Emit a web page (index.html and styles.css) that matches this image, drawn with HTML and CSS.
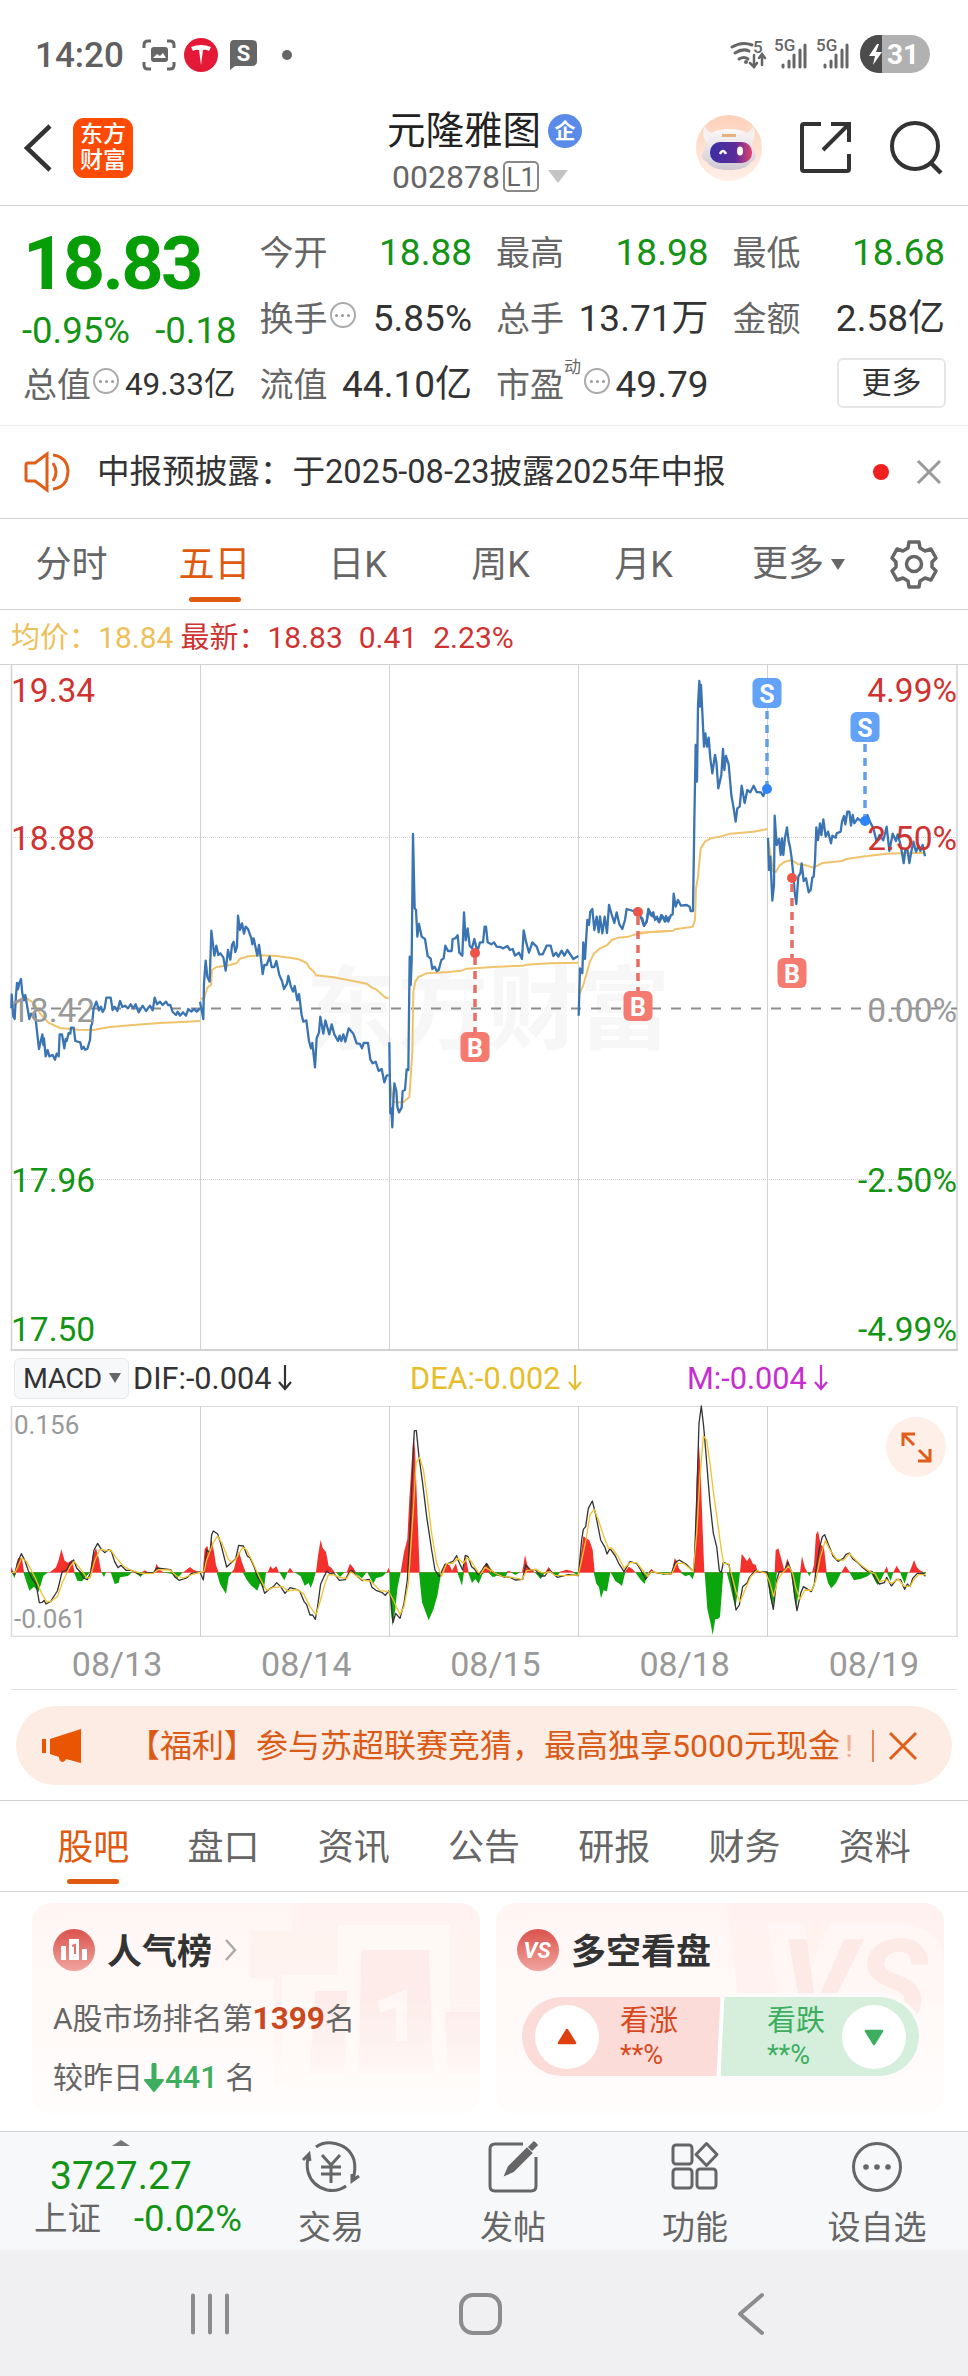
FILE: index.html
```
<!DOCTYPE html>
<html lang="zh">
<head>
    <meta charset="UTF-8">
    <meta name="viewport" content="width=device-width, initial-scale=1.0">
    <title>元隆雅图 002878</title>
    <link rel="stylesheet" href="styles.css">
</head>
<body>
    <div class="status-bar">
        <span class="clock">14:20</span>
        <svg class="status-left" width="160" height="40" viewBox="140 35 160 40">
            <g fill="none" stroke="#666" stroke-width="3">
                <path d="M144 48v-3q0-4 4-4h3M167 41h3q4 0 4 4v3M144 62v3q0 4 4 4h3M167 69h3q4 0 4-4v-3"/>
            </g>
            <rect x="151" y="47" width="17" height="15" rx="3" fill="#666"/>
            <path d="M153 58l4-4 3 2 3-3 3 5z" fill="#fff"/>
            <circle cx="201" cy="55" r="17" fill="#e31937"/>
            <path d="M191 47q10-4 20 0l-2 4q-3-2-6-1l-2 15-2-15q-3-1-6 1z" fill="#fff"/>
            <path d="M234 40h18q5 0 5 5v16q0 5-5 5h-17l-5 4v-25q0-5 4-5z" fill="#666"/>
            <text class="s-glyph" x="243.500" y="61" text-anchor="middle">S</text>
            <circle cx="287" cy="55" r="5" fill="#666"/>
        </svg>
        <svg class="status-right" width="206" height="44" viewBox="730 34 206 44">
            <g fill="none" stroke="#666" stroke-width="3" stroke-linecap="round">
                <path d="M734 48q10-6 20-2M737 54q8-5 14-2M741 60q5-3 9 0"/>
                <path d="M756 56v11M752 64l4 4 3-4M764 66v-10M761 59l3-4 3 4" stroke-width="2.500"/>
            </g>
            <circle cx="748" cy="63" r="2" fill="#666"/>
            <g class="net">
                <text x="755" y="54">5</text>
                <text x="776" y="52">5G</text>
                <text x="818" y="52">5G</text>
            </g>
            <g stroke="#666" stroke-width="3" stroke-linecap="round">
                <path d="M785 66v2M791 62v6M796 56v12M802 51v17M807 46v22"/>
                <path d="M827 66v2M833 62v6M838 56v12M844 51v17M849 46v22"/>
            </g>
            <rect x="862" y="36" width="70" height="38" rx="19" fill="#b1b1b1"/>
            <path d="M884 36h-3a19 19 0 0 0 0 38h3z" fill="#4c4c4c"/>
            <path d="M879 45l-8 12h6l-2 9 9-13h-6l3-8z" fill="#fff"/>
            <text class="bat" x="905" y="65" text-anchor="middle">31</text>
        </svg>
    </div>

    <header class="header">
        <svg class="back" width="32" height="50" viewBox="0 0 32 50"><path d="M30 3L7 25l23 22" fill="none" stroke="#333" stroke-width="4.500"/></svg>
        <div class="logo">东方<br>财富</div>
        <div class="title">
            <div class="name">元隆雅图<span class="qi">企</span></div>
            <div class="code">002878<span class="level">L1</span><i class="tri tri-grey"></i></div>
        </div>
        <div class="head-icons">
            <svg width="68" height="68" viewBox="0 0 68 68">
                <defs>
                    <linearGradient id="peach" x1="0" y1="0" x2="0" y2="1"><stop offset="0" stop-color="#fdd0b8"/><stop offset="1" stop-color="#fff0e8"/></linearGradient>
                    <linearGradient id="visor"><stop offset="0" stop-color="#3a2fa5"/><stop offset=".6" stop-color="#5a2b98"/><stop offset="1" stop-color="#e0436e"/></linearGradient>
                    <linearGradient id="shell" x1="0" y1="0" x2="0" y2="1"><stop offset="0" stop-color="#fbf8f8"/><stop offset="1" stop-color="#cfc8d2"/></linearGradient>
                </defs>
                <circle cx="34" cy="34" r="33" fill="url(#peach)"/>
                <path d="M10 12q-5 10 3 18h42q8-8 3-18-2 6-8 7-16-8-32 0-6-1-8-7z" fill="#f4f1f3"/>
                <path d="M12 30q0-15 22-15t23 15l4 12q-1 5-5 6-5 8-22 8T12 48q-5-2-5-7z" fill="url(#shell)"/>
                <path d="M27 20h14v3H27z" fill="#e6b17c"/>
                <rect x="15" y="28" width="42" height="21" rx="10" fill="url(#visor)"/>
                <path d="M25 40q3-6 6 0" fill="none" stroke="#fff" stroke-width="2.500"/>
                <ellipse cx="45" cy="37" rx="3" ry="4.500" fill="#fff"/>
            </svg>
            <svg width="54" height="54" viewBox="0 0 54 54"><path d="M22 3H5q-2 0-2 2v43q0 2 2 2h43q2 0 2-2V33M32 3h18v18M49 4L24 29" fill="none" stroke="#333" stroke-width="4"/></svg>
            <svg width="56" height="56" viewBox="0 0 56 56"><circle cx="26" cy="26" r="23" fill="none" stroke="#333" stroke-width="4"/><path d="M41 42l11 11" stroke="#333" stroke-width="4.500"/></svg>
        </div>
    </header>

    <section class="quote">
        <div class="price-box">
            <div class="price">18.83</div>
            <div class="change"><span>-0.95%</span><span>-0.18</span></div>
        </div>
        <div class="cell"><label>今开</label><b class="green">18.88</b></div>
        <div class="cell"><label>最高</label><b class="green">18.98</b></div>
        <div class="cell"><label>最低</label><b class="green">18.68</b></div>
        <div class="cell"><label>换手</label><i class="dots"></i><b>5.85%</b></div>
        <div class="cell"><label>总手</label><b>13.71万</b></div>
        <div class="cell"><label>金额</label><b>2.58亿</b></div>
        <div class="cell small"><label>总值</label><i class="dots"></i><b>49.33亿</b></div>
        <div class="cell"><label>流值</label><b>44.10亿</b></div>
        <div class="cell"><label>市盈</label><sup>动</sup><i class="dots"></i><b>49.79</b></div>
        <div class="cell"><span class="more-btn">更多</span></div>
    </section>

    <div class="notice">
        <svg width="48" height="42" viewBox="0 0 48 42" fill="none" stroke="#df5f1a" stroke-width="3"><path d="M4 12h7L23 3v36L11 30H4q-2 0-2-2V14q0-2 2-2zM29 12q6 9 0 18M29 4q9 1 13 8t0 18q-4 7-13 8"/></svg>
        <p>中报预披露：于2025-08-23披露2025年中报</p>
        <i class="red-dot"></i>
        <svg width="26" height="26" viewBox="0 0 26 26"><path d="M2 2l22 22M24 2L2 24" stroke="#999" stroke-width="3"/></svg>
    </div>

    <nav class="k-tabs">
        <span>分时</span>
        <span class="on">五日</span>
        <span>日K</span>
        <span>周K</span>
        <span>月K</span>
        <span>更多<i class="tri"></i></span>
        <svg width="50" height="50" viewBox="0 0 50 50" fill="none" stroke="#666" stroke-width="3.500"><path d="M20 3h10l1 6 5 3 6-2 5 9-4 4v5l4 4-5 9-6-2-5 3-1 6H20l-1-6-5-3-6 2-5-9 4-4v-5l-4-4 5-9 6 2 5-3z" stroke-linejoin="round"/><circle cx="25" cy="25" r="7.500"/></svg>
    </nav>

    <div class="legend">
        <span class="avg"><small>均价：</small>18.84</span>
        <span><small>最新：</small>18.83</span>
        <span>0.41</span>
        <span>2.23%</span>
    </div>

    <!-- 五日分时走势 -->
    <svg class="chart" width="968" height="688" viewBox="0 663 968 688">
        <text class="watermark" x="306" y="1042">东方财富</text>
        <g stroke="#d2d2d2" fill="none">
            <path d="M0 664.500h968" stroke-width="1"/>
            <path d="M11.500 665v686M957 665v686" stroke-width="1.500"/>
            <path d="M200.500 665v686M389.500 665v686M578.500 665v686M767.500 665v686"/>
            <path d="M11 837.500h946M11 1179.500h946" stroke-dasharray="1 1"/>
            <path d="M11 1350h947" stroke-width="2"/>
        </g>
        <path d="M31 1008.500h926" stroke="#8c8c8c" stroke-width="2" stroke-dasharray="10 10"/>
        <g class="avg-line">
            <g transform="translate(0 655) scale(.33333)">
                <polyline points="34,1055 50,1045 65,1030 80,1030 95,1040 105,1050 120,1075 145,1103 180,1119 235,1124 280,1125 330,1116 400,1110 480,1104 560,1100 600,1098"/>
                <polyline points="600,1030 612,1032 622,998 633,990 636,945 650,936 690,930 710,924 720,911 745,904 780,901 830,903 895,912 920,924 928,938 940,948 948,961 1000,967 1040,974 1100,986 1115,997 1130,1004 1145,1018 1158,1029 1166,1030"/>
            </g>
            <g transform="translate(370 655) scale(.33333)">
                <polyline points="60,1280 70,1342 100,1342 118,1326 127,1190 130,1010 136,980 145,966 170,955 235,951 275,947 290,941 370,936 460,932 470,929 540,925 625,923"/>
                <polyline points="627,1020 640,990 650,955 660,920 672,896 690,880 712,870 725,855 745,848 775,845 805,836 840,831 900,828"/>
            </g>
            <g transform="translate(640 655) scale(.33333)">
                <polyline points="0,833 100,827 105,823 158,815 165,795 168,700 174,665 182,580 195,560 215,549 240,545 270,536 340,530 383,522"/>
                <polyline points="385,560 400,650 408,650 418,632 435,620 455,615 475,628 498,631 520,638 548,624 605,618 620,612 675,604 740,596 800,594 855,594"/>
            </g>
        </g>
        <g class="price-line">
            <g transform="translate(0 655) scale(.33333)">
                <polyline points="34,1060 35,1018 40,1085 44,1092 48,1020 51,984 54,1003 58,984 63,972 67,1015 72,1036 76,1020 81,1050 88,1092 93,1076 98,1082 105,1070 110,1120 117,1182 122,1160 127,1138 130,1170 132,1150 137,1204 143,1185 148,1204 158,1200 165,1214 170,1196 176,1204 179,1138 186,1138 193,1180 197,1152 200,1158 206,1134 211,1136 213,1118 221,1118 226,1158 241,1162 245,1182 251,1175 255,1184 262,1182 270,1155 273,1112 276,1108 281,1060 289,1040 297,1066 303,1055 308,1071 314,1060 319,1028 332,1028 338,1065 344,1055 352,1068 360,1038 367,1056 375,1052 384,1060 392,1048 400,1060 407,1048 416,1072 428,1052 438,1068 450,1052 458,1066 464,1028 471,1048 480,1040 488,1050 498,1040 504,1050 511,1050 518,1071 528,1080 533,1070 540,1082 549,1072 558,1082 565,1062 574,1070 582,1062 590,1070 600,1060"/>
                <polyline points="600,1040 610,1092 612,985 617,917 622,965 629,980 634,827 638,860 643,902 649,872 655,900 661,895 670,907 677,947 684,885 691,914 696,870 701,860 706,891 711,875 714,782 720,825 726,805 732,836 737,815 744,822 754,850 757,868 761,850 772,902 777,870 782,905 788,957 793,930 800,930 809,905 815,936 823,936 829,918 838,960 846,978 852,1002 861,986 865,963 873,995 879,1010 884,993 892,1036 897,1017 905,1080 910,1100 919,1096 927,1158 933,1180 937,1164 945,1237 950,1150 957,1132 961,1085 970,1136 976,1096 988,1138 995,1108 1003,1138 1014,1158 1019,1142 1024,1158 1030,1138 1036,1160 1046,1120 1060,1136 1070,1165 1080,1167 1086,1180 1091,1164 1104,1164 1111,1213 1118,1225 1127,1220 1136,1248 1145,1242 1153,1282 1160,1262 1166,1260"/>
            </g>
            <g transform="translate(370 655) scale(.33333)">
                <polyline points="58,1162 61,1375 64,1360 67,1417 70,1340 73,1285 79,1308 82,1355 87,1372 95,1358 98,1308 105,1305 110,1243 115,1245 119,905 122,990 125,920 129,537 134,760 138,765 142,845 147,807 155,845 165,852 173,903 182,911 187,942 194,935 200,948 206,945 214,915 221,910 226,872 234,888 245,888 248,852 256,850 263,841 268,893 277,902 282,772 287,856 293,820 299,872 306,880 313,852 322,890 330,862 339,862 344,815 348,815 353,862 364,868 372,862 380,875 391,876 400,880 412,873 420,885 428,882 435,902 447,893 456,912 461,826 468,860 477,893 487,862 500,875 508,898 518,898 530,872 542,872 550,903 558,893 565,905 575,887 583,902 592,885 610,912 625,903"/>
                <polyline points="626,1082 630,940 637,955 640,862 645,912 652,795 657,810 661,770 667,762 673,825 680,785 686,832 690,784 697,835 704,785 711,834 717,750 724,775 733,804 740,772 748,808 757,822 765,795 770,762 790,768 800,762 811,782 822,812 830,800 836,764 847,784 860,790 868,802 877,782 885,800 900,785"/>
            </g>
            <g transform="translate(640 655) scale(.33333)">
                <polyline points="0,788 7,790 12,813 20,800 25,762 32,780 40,772 45,795 51,785 56,800 64,780 73,795 78,783 85,800 93,780 98,778 101,716 107,755 114,735 123,752 140,750 149,755 152,768 159,768 163,500 167,270 171,380 174,150 178,78 180,155 183,90 192,275 196,235 201,275 206,248 211,310 217,355 225,300 229,320 235,400 244,360 249,282 253,345 258,303 266,328 274,420 281,460 287,500 292,460 299,455 305,392 314,444 322,405 331,412 341,392 350,411 363,412 370,423 377,405 383,402"/>
                <polyline points="384,548 387,645 391,605 397,737 402,690 404,482 410,570 417,552 422,600 426,550 430,600 435,548 441,517 446,560 450,575 455,610 460,660 464,710 469,747 475,665 481,655 485,625 491,678 498,670 506,712 512,705 517,668 521,665 525,618 529,517 534,555 540,505 544,540 550,493 557,545 564,530 573,565 577,542 587,548 590,535 602,530 606,500 612,483 616,508 622,470 628,470 633,512 638,480 643,505 653,490 665,500 674,497 682,480 690,500 700,520 710,560 719,540 730,556 740,515 748,588 758,536 768,558 773,538 782,570 791,624 796,585 802,582 808,624 814,590 820,560 828,590 836,572 841,588 848,570 855,604"/>
            </g>
        </g>
        <g class="buy">
            <path d="M475 957v76M638 917v74M792 884v74"/>
            <circle cx="475" cy="953" r="5"/><circle cx="638" cy="912" r="5"/><circle cx="792" cy="878" r="5"/>
            <rect x="460.500" y="1032" width="29" height="30" rx="6"/><text x="475" y="1057">B</text>
            <rect x="623.500" y="991" width="29" height="30" rx="6"/><text x="638" y="1016">B</text>
            <rect x="777.500" y="958" width="29" height="30" rx="6"/><text x="792" y="983">B</text>
        </g>
        <g class="sell">
            <path d="M767 711v74M865 744v74"/>
            <circle cx="767" cy="789" r="5"/><circle cx="865" cy="821" r="5"/>
            <rect x="752.500" y="678" width="29" height="30" rx="6"/><text x="767" y="703">S</text>
            <rect x="850.500" y="712" width="29" height="30" rx="6"/><text x="865" y="737">S</text>
        </g>
        <g class="axis">
            <text x="11" y="702" fill="#cf3331">19.34</text>
            <text x="11" y="850" fill="#cf3331">18.88</text>
            <text x="11" y="1022" fill="#999">18.42</text>
            <text x="11" y="1192" fill="#149414">17.96</text>
            <text x="11" y="1341" fill="#149414">17.50</text>
            <g text-anchor="end">
                <text x="957" y="702" fill="#cf3331">4.99%</text>
                <text x="957" y="850" fill="#cf3331">2.50%</text>
                <text x="957" y="1022" fill="#999">0.00%</text>
                <text x="957" y="1192" fill="#149414">-2.50%</text>
                <text x="957" y="1341" fill="#149414">-4.99%</text>
            </g>
        </g>
    </svg>

    <div class="macd-head">
        <span class="macd-btn">MACD<i class="tri"></i></span>
        <span class="ind dif">DIF:-0.004<svg width="14" height="26" viewBox="0 0 14 26"><path d="M7 0v24M1 17l6 7 6-7"/></svg></span>
        <span class="ind dea">DEA:-0.002<svg width="14" height="26" viewBox="0 0 14 26"><path d="M7 0v24M1 17l6 7 6-7"/></svg></span>
        <span class="ind m">M:-0.004<svg width="14" height="26" viewBox="0 0 14 26"><path d="M7 0v24M1 17l6 7 6-7"/></svg></span>
    </div>

    <div class="macd-wrap">
        <svg class="chart" width="968" height="232" viewBox="0 1405 968 232">
            <g stroke="#dcdcdc" fill="none">
                <path d="M11 1406.500h946"/>
                <path d="M11.500 1406v231M957 1406v231M11 1636.500h947" stroke-width="1.500"/>
                <path d="M200.500 1406v231M389.500 1406v231M578.500 1406v231M767.500 1406v231" stroke="#d0d0d0"/>
            </g>
            <path d="M12 1572.500h914" stroke="#f08080" stroke-width="1"/>
            <g transform="translate(0 1400) scale(.33333)">
                <path fill="#f4302d" d="M33 517v-16l8 16zM44 517l10-42h12l6 42zM150 517l18-15 8-22 8-32 10 34 10 6 12-8 8 37zM270 517l8-50 10-23 8 30 8 43zM425 517l10-6 8 6zM463 517l6-25 14 20 8 5zM550 517l20-16 10 8 20 8zM608 517l6-70 8-10 6 25 6-45 8 38 6 40 8 22zM695 517l7-10 6-25 9-28 8 30 12 33zM803 517l8-18 8 8 10-8 8 18zM862 517l8-14 10 14zM948 517l6-50 8-48 6 25 10 12 8 42 8 5 10 14zM1040 517l10-26 10 12 8 14zM1160 517l6-14 4 14zM1202 517l10-60 10-40 6-120 12-190 5 40 5 130 9 240zM1328 517l10-28 12 8 6 15 12-22 6 27zM1388 517l8-50 10 50zM1450 517l9-26 12 26z"/>
                <path fill="#0ba50d" d="M36 517l7 18 5-18zM70 517l18 55 14-12 14 16 14-48 14-11zM222 517l10 25 14 2 24-27zM304 517l8 14 6-14zM332 517l12 35 12-4 4-16 24-4 12-11zM404 517l18 14 10-14zM484 517l30 4 18 14 16-18zM650 517l10 35 18 30 8-50 10-15zM728 517l12 22 14 18 18 15 8-22 12 14 6-47zM838 517l15 24 10-24zM884 517l18 12 12 28 12-8 6 15 8-20 7-27zM1008 517l12 14 14-14zM1062 517l24 18 14-18zM1102 517l18 34 8-16 20-6 12-12zM1168 517l4 110 6 52 8-52 6-60 10-50zM1257 517l9 90 20 54 14-32 12-42 12-70zM1372 517l14 40 6-40zM1404 517l12 32 10-12 10 14 14-34zM1466 517l18 14 14-14z"/>
                <polyline class="dif-line" points="34,515 44,524 52,490 64,461 74,480 85,512 95,534 108,552 118,608 127,607 132,601 138,612 152,604 172,573 178,550 186,516 200,510 210,490 221,480 230,504 241,516 250,534 262,539 272,518 282,450 293,430 304,448 314,458 325,449 334,454 344,485 354,503 363,496 378,511 394,511 404,516 420,524 435,519 460,519 470,504 512,509 524,530 537,541 560,534 575,520 600,516 610,540 620,450 630,458 635,404 640,393 653,402 662,430 680,501 694,488 707,476 716,436 730,438 742,468 750,473 763,502 773,532 784,549 794,580 806,569 820,560 830,548 842,560 855,580 870,563 889,568 899,573 912,604 920,614 930,645 938,645 946,658 952,625 962,552 972,530 980,514 992,522 1000,518 1018,541 1036,539 1048,516 1056,511 1075,532 1088,542 1108,538 1116,562 1128,571 1145,577 1156,586 1166,573 1172,590 1179,668 1187,640 1200,655 1212,610 1222,540 1230,400 1240,150 1243,92 1249,92 1257,170 1268,250 1280,350 1295,450 1305,510 1318,530 1335,493 1345,490 1360,483 1370,467 1374,480 1388,510 1396,466 1404,470 1415,500 1424,508 1435,524 1450,518 1460,490 1474,512 1482,520 1500,527"/>
                <polyline class="dea-line" points="34,518 45,518 65,474 80,485 105,532 125,580 140,606 152,604 172,590 188,545 210,500 223,484 240,505 260,532 270,534 285,480 300,448 320,452 332,450 350,475 370,498 395,512 420,519 435,521 460,520 475,509 510,510 530,528 550,534 580,522 600,517 612,515 620,480 640,428 653,408 666,430 685,478 698,488 710,473 728,442 740,450 755,480 770,513 785,545 800,571 820,562 850,560 862,573 890,569 910,580 930,620 948,644 960,606 975,550 985,525 1000,524 1018,532 1040,535 1052,516 1090,541 1112,543 1140,572 1166,575 1180,600 1200,644 1212,620 1225,550 1240,330 1248,190 1259,172 1270,208 1280,280 1295,400 1310,490 1325,529 1340,490 1358,490 1374,475 1390,490 1402,473 1415,485 1435,518 1450,516 1464,498 1480,517 1500,524"/>
            </g>
            <g transform="translate(480 1400) scale(.33333)">
                <path fill="#f4302d" d="M8 517l11-28 12 28zM78 517l8-5 10 5zM126 517l4-20 5-32 7 30 8 10 14 12zM196 517l10-16 12 16zM235 517l25-8 15 4 10 4zM296 517l6-48 8-60 18 12 10 28 6 68zM434 517l12-17 10 6 10 11zM506 517l8-11 10 11zM576 517l8-43 8 12 4 18 10 13zM640 517l5-80 5-200 6-117 6 95 6 175 5 127zM780 517l5-55 8 10 8 12 8-12 10 20 8 2 7 23zM884 517l3-66 8-6 8 28 10 38 9-36 8 30 8 12zM960 517l6-48 8 32 8 16zM996 517l6-22 6-92 6-10 8 40 10 10 8 74zM1084 517l12-20 14 20zM1212 517l8-18 6 18zM1240 517l10-20 12 20zM1288 517l8-20 6-17 8 20 8 10 14 7z"/>
                <path fill="#0ba50d" d="M24 517l14 14 20-7 16 10 10-17zM92 517l14 8 14-8zM164 517l18 20 14-20zM218 517l12 14 10-14zM280 517l10 9 6-9zM341 517l8 34 8 10 6 34 8-24 10 3 10-57zM392 517l14 26 12 8 8 7 10-41zM466 517l14 20 14 15 10-35zM530 517l20 8 24-8zM600 517l16 12 12-5 10 14 6-21zM674 517l8 110 10 44 6 34 8-48 8 0 6-6 10-134zM740 517l10 38 16 70 8-55 6-53zM858 517l12 70 9 38 8-80 4-28zM932 517l8 50 9 54 8-50 6-54zM982 517l6 12 6-12zM1036 517l8 32 10 16 14-16 16-32zM1108 517l14 24 22-5 20-8 12-11zM1172 517l20 38 12-18 10-20zM1220 517l12 26 8-26zM1260 517l14 34 10-34zM1326 517l6 12 6-12z"/>
                <polyline class="dif-line" points="0,520 10,504 19,492 34,514 48,520 68,530 90,532 106,540 128,538 137,494 150,512 165,508 182,528 195,528 206,510 232,532 265,524 295,527 305,420 310,388 317,380 325,325 337,303 347,343 362,420 375,442 381,462 390,446 406,468 416,490 432,515 450,485 470,490 484,513 497,538 512,515 540,520 574,522 585,487 598,480 620,494 636,510 642,512 650,300 657,70 664,18 671,80 677,150 690,310 700,400 710,440 718,512 724,517 730,487 747,494 758,560 768,630 778,615 788,560 802,548 808,532 825,512 840,516 862,516 872,590 880,628 890,540 898,515 912,515 924,486 936,520 944,590 951,632 962,580 970,560 994,575 1003,552 1008,510 1018,446 1027,410 1034,404 1048,440 1059,468 1074,484 1090,475 1098,463 1108,459 1118,476 1132,487 1145,500 1162,514 1176,514 1186,536 1198,552 1213,548 1220,532 1234,558 1250,538 1262,539 1274,568 1282,552 1290,560 1298,535 1312,520 1330,520 1336,529"/>
                <polyline class="dea-line" points="0,525 15,502 30,510 45,519 68,530 95,532 126,538 140,512 168,508 182,516 195,520 208,514 225,526 260,527 295,525 305,480 318,420 330,345 342,328 355,360 370,405 385,445 395,444 415,470 432,505 450,488 470,488 490,513 503,529 514,515 545,520 575,522 590,490 610,490 640,514 650,400 660,230 670,108 680,120 690,190 700,275 714,375 724,450 731,490 745,491 755,525 768,575 780,605 795,570 812,530 830,512 858,520 870,550 881,590 893,540 905,522 926,498 938,520 948,565 960,598 975,570 996,571 1008,540 1020,475 1036,421 1050,450 1070,478 1090,481 1108,461 1122,475 1140,493 1170,515 1186,522 1198,545 1220,539 1234,551 1255,537 1272,558 1290,559 1302,538 1316,524 1336,524"/>
            </g>
            <g class="range"><text x="14" y="1434">0.156</text><text x="14" y="1628">-0.061</text></g>
        </svg>
        <div class="expand"><svg width="60" height="60" viewBox="0 0 60 60" fill="none" stroke="#df5f1a" stroke-width="3"><path d="M17 29V17h12M17 17l11 11M33 33l11 11M44 32v12H32"/></svg></div>
    </div>

    <div class="dates"><span>08/13</span><span>08/14</span><span>08/15</span><span>08/18</span><span>08/19</span></div>

    <div class="promo">
        <svg width="40" height="36" viewBox="0 0 40 36" fill="#ea5504"><path d="M0 11h4v14H0zM8 11L39 1v34l-15-4q-1 3-4 3-3-1-3-5l-9-3z"/></svg>
        <p>【福利】参与苏超联赛竞猜，最高独享5000元现金<span>!</span></p>
        <i class="bar"></i>
        <svg width="30" height="30" viewBox="0 0 30 30"><path d="M2 2l26 26M28 2L2 28" stroke="#df5f1a" stroke-width="3"/></svg>
    </div>

    <nav class="info-tabs">
        <span class="on">股吧</span><span>盘口</span><span>资讯</span><span>公告</span><span>研报</span><span>财务</span><span>资料</span>
    </nav>

    <div class="cards">
        <div class="card">
            <svg class="card-bg" width="240" height="210" viewBox="0 0 240 210">
                <path d="M52 0h188v190H34V75H10V28h42z" fill="#fff1ee" opacity=".7"/>
                <path d="M98 22h112v90h30v78H42V72h56z" fill="#fffaf8" opacity=".8"/>
                <g fill="#fce7e4"><path d="M121 47h68l4 125h-74zM75 88h32l-3 84H70zM205 109h35v63h-32z" opacity=".75"/></g>
                <path d="M138 98l29-12v52h-11v-34l-16 6z" fill="#fff7f5"/>
            </svg>
            <h3>
                <svg width="42" height="42" viewBox="0 0 42 42">
                    <defs><linearGradient id="badge" x1="0" y1="0" x2="0" y2="1"><stop offset="0" stop-color="#d9534c"/><stop offset="1" stop-color="#f1a49e"/></linearGradient></defs>
                    <circle cx="21" cy="21" r="21" fill="url(#badge)"/>
                    <path d="M8 17h5v14H8zM16 10h10v21H16zM29 20h5v11h-5z" fill="#fff"/>
                    <path d="M19 17l3-1v9" fill="none" stroke="#e0716b" stroke-width="2"/>
                </svg>
                <span>人气榜</span>
                <svg class="chev" width="14" height="22" viewBox="0 0 14 22"><path d="M2 1l9 10-9 10" fill="none" stroke="#aaa" stroke-width="2.500"/></svg>
            </h3>
            <p>A股市场排名第<b class="hot">1399</b>名</p>
            <p>较昨日<svg width="22" height="30" viewBox="0 0 22 30"><path d="M11 2v18" stroke="#3dae60" stroke-width="5" stroke-linecap="round"/><path d="M2 17h18l-9 11z" fill="#3dae60" stroke="#3dae60" stroke-width="2" stroke-linejoin="round"/></svg><b class="down">441</b> 名</p>
        </div>
        <div class="card">
            <svg class="card-bg" width="240" height="210" viewBox="0 0 240 210">
                <path d="M22 0h218v92H34z" fill="#fff0ed" opacity=".8"/>
                <path d="M64 20h36l8 40 18-40h70q40 5 44 35v50H76z" fill="#fff7f5"/>
                <text class="vs-bg" x="76" y="122">VS</text>
            </svg>
            <h3>
                <svg width="42" height="42" viewBox="0 0 42 42"><circle cx="21" cy="21" r="21" fill="url(#badge)"/><text class="vs" x="20" y="29" text-anchor="middle">VS</text></svg>
                <span>多空看盘</span>
            </h3>
            <div class="vote">
                <div class="up"><i class="ball"><svg width="22" height="18" viewBox="0 0 22 18"><path d="M11 2l8 13H3z" fill="#e04010" stroke="#e04010" stroke-width="2.500" stroke-linejoin="round"/></svg></i><div>看涨<em>**%</em></div></div>
                <div class="fall"><div>看跌<em>**%</em></div><i class="ball"><svg width="22" height="18" viewBox="0 0 22 18"><path d="M11 16l8-13H3z" fill="#3dae60" stroke="#3dae60" stroke-width="2.500" stroke-linejoin="round"/></svg></i></div>
            </div>
        </div>
    </div>

    <footer class="bottom-nav">
        <div class="index">
            <i class="caret"></i>
            <strong>3727.27</strong>
            <div><span>上证</span><em>-0.02%</em></div>
        </div>
        <div class="nav-item">
            <svg width="60" height="54" viewBox="0 0 60 54" fill="none" stroke="#666" stroke-width="3"><path d="M15 7Q22 2 31 3q17 2 22 17 2 9-1 20M45 46q-8 6-19 4Q11 46 7 32q-2-9 1-17M2 20l6-6 1 7M58 36l-7 5 0-7"/><path d="M21 15l9 10 9-10M20 27h20M20 34h20M30 25v18"/></svg>
            <span>交易</span>
        </div>
        <div class="nav-item">
            <svg width="60" height="54" viewBox="0 0 60 54" fill="none" stroke="#666" stroke-width="3"><path d="M40 4H12q-5 0-5 5v37q0 5 5 5h36q5 0 5-5V17"/><path d="M23 34l3-7L44 9l4 4-18 18zM49 7l4-4" fill="#666" stroke-width="2.500"/><path d="M47 9l6-6" stroke-width="6"/></svg>
            <span>发帖</span>
        </div>
        <div class="nav-item">
            <svg width="60" height="54" viewBox="0 0 60 54" fill="none" stroke="#666" stroke-width="3"><rect x="8" y="5" width="19" height="19" rx="3"/><rect x="8" y="29" width="19" height="19" rx="3"/><rect x="32" y="29" width="19" height="19" rx="3"/><path d="M41.500 3.500L52 14.500l-10.500 11L31 14.500z" stroke-linejoin="round"/></svg>
            <span>功能</span>
        </div>
        <div class="nav-item">
            <svg width="60" height="54" viewBox="0 0 60 54"><circle cx="30" cy="27" r="23.500" fill="none" stroke="#666" stroke-width="3"/><g fill="#666"><circle cx="19" cy="27" r="2.800"/><circle cx="30" cy="27" r="2.800"/><circle cx="41" cy="27" r="2.800"/></g></svg>
            <span>设自选</span>
        </div>
    </footer>

    <div class="sys-nav">
        <svg width="968" height="126" viewBox="0 2250 968 126" fill="none" stroke="#8c8c8c" stroke-width="4" stroke-linecap="round" stroke-linejoin="round">
            <path d="M193 2295.500v37M210 2295.500v37M227 2295.500v37"/>
            <rect x="461" y="2295" width="39" height="38" rx="12"/>
            <path d="M762 2295l-22 19 22 19"/>
        </svg>
    </div>
</body>
</html>
```
FILE: styles.css
```
* {
    margin: 0;
    padding: 0;
    box-sizing: border-box;
}

body {
    width: 968px;
    background-color: #fff;
    color: #333;
    font-family: Roboto, "Noto Sans CJK SC", sans-serif;
}

i, em {
    font-style: normal;
}

svg {
    display: block;
    flex: none;
}

.green {
    color: #149414;
}

.tri {
    display: inline-block;
    border: 7px solid transparent;
    border-top: 11px solid #666;
    border-bottom: 0;
}

/* 状态栏 */
.status-bar {
    display: flex;
    align-items: center;
    height: 104px;
    padding: 6px 34px 0 35px;
}

.clock {
    width: 105px;
    font-size: 35px;
    font-weight: 500;
    color: #606060;
}

.status-right {
    margin-left: auto;
}

.s-glyph {
    font-size: 22px;
    font-weight: 700;
    fill: #fff;
}

.net {
    font-size: 17px;
    font-weight: 500;
    fill: #666;
}

.bat {
    font-size: 28px;
    font-weight: 700;
    fill: #fff;
}

/* 顶部 */
.header {
    display: flex;
    align-items: center;
    height: 102px;
    padding: 0 23px 14px 20px;
    border-bottom: 1px solid #d2d2d2;
}

.logo {
    width: 60px;
    height: 60px;
    margin-left: 21px;
    padding-top: 4px;
    border-radius: 11px;
    background-color: #fd4b05;
    color: #fff;
    font-size: 23px;
    font-weight: 500;
    line-height: 26px;
    text-align: center;
}

.title {
    width: 190px;
    margin-left: 254px;
    padding-top: 10px;
}

.name {
    display: flex;
    align-items: center;
    height: 48px;
    font-size: 38.5px;
    line-height: 48px;
    color: #222;
    white-space: nowrap;
}

.qi {
    width: 34px;
    height: 34px;
    margin-left: 7px;
    border-radius: 50%;
    background-color: #5b8be8;
    color: #fff;
    font-size: 21px;
    font-weight: 700;
    line-height: 34px;
    text-align: center;
    flex: none;
}

.code {
    display: flex;
    align-items: center;
    height: 44px;
    padding-left: 5px;
    font-size: 32px;
    color: #666;
}

.level {
    width: 36px;
    height: 31px;
    margin-left: 3px;
    border: 2px solid #888;
    border-radius: 5px;
    font-size: 26px;
    line-height: 28px;
    text-align: center;
}

.tri-grey {
    margin-left: 9px;
    border-width: 10px;
    border-top: 13px solid #c4c4c4;
    border-bottom: 0;
}

.head-icons {
    display: flex;
    align-items: center;
    margin-left: auto;
    gap: 36px;
}

/* 行情 */
.quote {
    display: grid;
    grid-template-columns: repeat(4, 1fr);
    grid-template-rows: repeat(3, 66px);
    column-gap: 24px;
    height: 220px;
    padding: 14px 23px 0;
    border-bottom: 1px solid #ececec;
}

.price-box {
    grid-row: 1 / 3;
    margin-right: -1px;
    color: #079d07;
}

.price {
    height: 87px;
    font-size: 74px;
    font-weight: 700;
    line-height: 87px;
    letter-spacing: -2.7px;
}

.change {
    display: flex;
    justify-content: space-between;
    margin-left: -1px;
    font-size: 36.5px;
    line-height: 47px;
    color: #149414;
}

.cell {
    display: flex;
    align-items: center;
    font-size: 37px;
    line-height: 50px;
    white-space: nowrap;
}

.cell label {
    font-size: 34px;
    color: #666;
}

.cell b {
    margin-left: auto;
    font-size: 37px;
    font-weight: 400;
}

.cell.small b {
    font-size: 31.5px;
}

.cell sup {
    align-self: flex-start;
    width: 18px;
    font-size: 17px;
    line-height: 30px;
    color: #666;
}

.dots {
    display: flex;
    align-items: center;
    justify-content: center;
    width: 26px;
    height: 26px;
    margin: -8px 0 0 2px;
    border: 2px solid #aaa;
    border-radius: 50%;
}

.dots::before {
    content: '';
    width: 3px;
    height: 3px;
    border-radius: 50%;
    background-color: #999;
    box-shadow: -6px 0 #999, 6px 0 #999;
}

.more-btn {
    width: 109px;
    height: 50px;
    margin: -4px -1px 0 auto;
    border: 2px solid #e6e6e6;
    border-radius: 6px;
    font-size: 30px;
    line-height: 45px;
    text-align: center;
}

/* 公告 */
.notice {
    display: flex;
    align-items: center;
    height: 93px;
    padding: 0 26px 0 24px;
    border-bottom: 1px solid #d2d2d2;
}

.notice p {
    margin-left: 25px;
    font-size: 32.6px;
    line-height: 48px;
}

.red-dot {
    width: 16px;
    height: 16px;
    margin: 0 27px 0 auto;
    border-radius: 50%;
    background-color: #f02020;
}

/* K线切换 */
.k-tabs {
    display: flex;
    align-items: center;
    height: 91px;
    padding: 0 29px 0 0;
    border-bottom: 1px solid #d2d2d2;
    font-size: 36px;
    line-height: 92px;
    color: #666;
}

.k-tabs span {
    width: 143px;
    height: 90px;
    text-align: center;
}

.k-tabs span:nth-child(6) {
    display: flex;
    align-items: center;
    width: 136px;
    margin-left: 37px;
}

.k-tabs .tri {
    margin-left: 7px;
}

.k-tabs svg {
    margin-left: auto;
}

.on {
    position: relative;
    color: #df5a10;
}

.on::after {
    content: '';
    position: absolute;
    bottom: 7px;
    left: 50%;
    width: 52px;
    height: 5px;
    margin-left: -26px;
    border-radius: 3px;
    background-color: #df5a10;
}

.legend {
    display: flex;
    height: 53px;
    padding-left: 11px;
    font-size: 30px;
    line-height: 55px;
    color: #cf3331;
}

.legend small {
    font-size: 29px;
}

.legend span {
    margin-right: 16px;
}

.legend .avg {
    margin-right: 7px;
    color: #eec05a;
}

/* 走势图 */
.watermark {
    font-size: 91px;
    font-weight: 700;
    fill: #f7f7f7;
}

.chart polyline {
    fill: none;
    stroke-linejoin: round;
    vector-effect: non-scaling-stroke;
}

.avg-line {
    stroke: #efc36c;
    stroke-width: 2;
}

.price-line {
    stroke: #3a74b3;
    stroke-width: 2.3;
}

.axis {
    font-size: 33.5px;
}

.buy, .sell {
    font-size: 25px;
    font-weight: 700;
    text-anchor: middle;
}

.buy path, .sell path {
    stroke-width: 3.5;
    stroke-dasharray: 8 6;
}

.buy path {
    stroke: #e86c63;
}

.buy circle {
    fill: #ee5549;
}

.buy rect {
    fill: #f57b70;
}

.sell path {
    stroke: #629eea;
}

.sell circle {
    fill: #2e83f7;
}

.sell rect {
    fill: #62a2f8;
}

.buy text, .sell text {
    fill: #fff;
}

/* MACD */
.macd-head {
    display: flex;
    align-items: center;
    height: 54px;
    padding-left: 14px;
    font-size: 30.7px;
}

.macd-btn {
    display: flex;
    align-items: center;
    justify-content: space-between;
    width: 115px;
    height: 41px;
    padding: 0 7px 0 8px;
    border: 1px solid #e6e8eb;
    border-radius: 6px;
    background-color: #f7f8fa;
    font-size: 28.5px;
    letter-spacing: -0.5px;
}

.macd-btn .tri {
    border-width: 6px;
    border-top-width: 10px;
    border-bottom: 0;
}

.ind {
    display: flex;
    align-items: center;
    gap: 7px;
}

.ind path {
    fill: none;
    stroke: currentColor;
    stroke-width: 2.2;
}

.dif {
    width: 277px;
    margin-left: 4px;
}

.dea {
    width: 277px;
    color: #e6be2c;
}

.m {
    color: #c62fce;
}

.macd-wrap {
    position: relative;
}

.macd-wrap .chart .dif-line {
    stroke: #333;
    stroke-width: 1.3;
}

.macd-wrap .chart .dea-line {
    stroke: #efc22e;
    stroke-width: 1.3;
}

.range {
    font-size: 26px;
    fill: #999;
}

.expand {
    position: absolute;
    top: 12px;
    right: 22px;
    border-radius: 50%;
    background-color: #fef0e9;
}

.dates {
    display: flex;
    height: 53px;
    margin: 0 11px;
    border-bottom: 1px solid #e0e0e0;
    font-size: 34px;
    line-height: 54px;
    color: #999;
}

.dates span {
    flex: 1;
    text-align: center;
    text-indent: 23px;
}

/* 活动条 */
.promo {
    display: flex;
    align-items: center;
    height: 79px;
    margin: 16px 16px 15px;
    padding: 0 34px 0 26px;
    border-radius: 40px;
    background-color: #fcece3;
    color: #da5a17;
}

.promo p {
    margin-left: 46px;
    font-size: 32px;
    line-height: 76px;
    white-space: nowrap;
}

.promo p span {
    margin-left: 5px;
    color: #efb091;
}

.bar {
    width: 2px;
    height: 32px;
    margin: 0 14px 0 auto;
    background-color: #e98555;
}

.info-tabs {
    display: flex;
    height: 92px;
    padding: 0 28px;
    border-top: 1px solid #d2d2d2;
    border-bottom: 1px solid #d2d2d2;
    font-size: 36px;
    line-height: 95px;
    color: #666;
}

.info-tabs span {
    flex: 1;
    height: 90px;
    text-align: center;
}

/* 卡片 */
.cards {
    display: flex;
    gap: 16px;
    height: 239px;
    padding: 11px 24px 17px 32px;
}

.card {
    position: relative;
    flex: 1;
    padding: 25px 21px;
    border-radius: 20px;
    background: linear-gradient(#fff6f4, #fffdfc);
    overflow: hidden;
}

.card-bg {
    position: absolute;
    top: 0;
    right: 0;
    -webkit-mask-image: linear-gradient(#000 45%, transparent 92%);
    mask-image: linear-gradient(#000 45%, transparent 92%);
}

.card h3 {
    position: relative;
    display: flex;
    align-items: center;
    gap: 12px;
    height: 44px;
    font-size: 35px;
    font-weight: 700;
    line-height: 44px;
    white-space: nowrap;
}

.card h3 span {
    padding-top: 5px;
}

.card p {
    position: relative;
    display: flex;
    align-items: center;
    margin-top: 15px;
    font-size: 30px;
    line-height: 44px;
    color: #666;
    white-space: pre;
}

.card h3 + p {
    margin-top: 25px;
}

.hot {
    font-size: 31.5px;
    color: #c9481e;
}

.down {
    font-size: 31px;
    font-weight: 500;
    color: #3dae60;
}

.vs {
    font-size: 22px;
    font-weight: 700;
    font-style: italic;
    fill: #fff;
}

.vs-bg {
    font-size: 120px;
    font-weight: 700;
    font-style: italic;
    fill: #fdeae7;
}

.vote {
    position: relative;
    display: flex;
    width: 405px;
    height: 87px;
    margin: 21px 0 0 1px;
    border: 4px solid #fffafa;
    border-radius: 44px;
    background-color: #fff;
    font-size: 29px;
    line-height: 38px;
    overflow: hidden;
}

.up, .fall {
    display: flex;
    align-items: center;
    flex: 1;
}

.up {
    gap: 21px;
    padding-left: 13px;
    background-color: #fcdcd9;
    color: #d9481c;
    clip-path: polygon(0 0, 100% 0, 98% 100%, 0 100%);
}

.fall {
    justify-content: flex-end;
    gap: 17px;
    padding-right: 13px;
    background-color: #d5efdc;
    color: #3dae60;
    clip-path: polygon(2% 0, 100% 0, 100% 100%, 0 100%);
}

.vote em {
    display: block;
    font-size: 27px;
    line-height: 31px;
}

.ball {
    display: flex;
    align-items: center;
    justify-content: center;
    width: 64px;
    height: 64px;
    border-radius: 50%;
    background-color: #fff;
}

/* 底部 */
.bottom-nav {
    display: flex;
    height: 119px;
    border-top: 1px solid #d2d6da;
    background-color: #f7f8fa;
    color: #666;
}

.index {
    display: flex;
    flex-direction: column;
    align-items: center;
    width: 240px;
    padding: 8px 0 0 2px;
}

.caret {
    border: 9px solid transparent;
    border-bottom: 6px solid #777;
    border-top: 0;
}

.index strong {
    margin-top: 9px;
    font-size: 39px;
    font-weight: 400;
    line-height: 42px;
    color: #149414;
}

.index div {
    display: flex;
    justify-content: space-between;
    width: 208px;
    margin-left: 34px;
    font-size: 33.5px;
    line-height: 44px;
}

.index em {
    font-size: 36.5px;
    color: #149414;
}

.nav-item {
    display: flex;
    flex-direction: column;
    align-items: center;
    width: 182px;
    padding-top: 8px;
    font-size: 33px;
}

.nav-item span {
    margin-top: 9px;
    line-height: 50px;
}

.sys-nav {
    background-color: #f0f0f2;
}
```
